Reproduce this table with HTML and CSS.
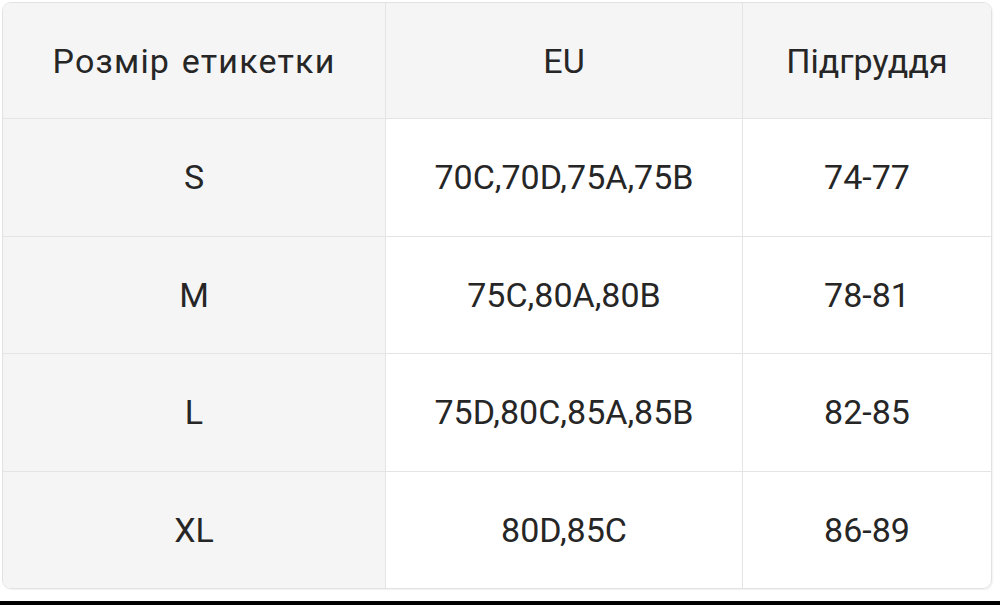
FILE: index.html
```html
<!DOCTYPE html>
<html lang="uk">
<head>
<meta charset="utf-8">
<title>Розмірна сітка</title>
<link rel="stylesheet" href="styles.css">
</head>
<body>
<div class="page">
  <div class="card">
    <table class="sizes">
      <thead>
        <tr><th class="c1 wide">Розмір етикетки</th><th class="c2">EU</th><th class="c3">Підгруддя</th></tr>
      </thead>
      <tbody>
        <tr><td class="c1">S</td><td class="c2">70C,70D,75A,75B</td><td class="c3">74-77</td></tr>
        <tr><td class="c1">M</td><td class="c2">75C,80A,80B</td><td class="c3">78-81</td></tr>
        <tr><td class="c1">L</td><td class="c2">75D,80C,85A,85B</td><td class="c3">82-85</td></tr>
        <tr><td class="c1">XL</td><td class="c2">80D,85C</td><td class="c3">86-89</td></tr>
      </tbody>
    </table>
  </div>
  <div class="bar"></div>
</div>
</body>
</html>
```
FILE: styles.css
```css
html, body {
  margin: 0;
  padding: 0;
  background: #ffffff;
}
.page {
  width: 1000px;
  height: 605px;
  box-sizing: border-box;
  padding: 2px 8px 0 2px;
  display: flex;
  flex-direction: column;
}
.card {
  width: 990px;
  height: 587px;
  border: 1px solid #e2e2e2;
  border-radius: 9px;
  overflow: hidden;
  box-sizing: border-box;
  box-shadow: 1px 1px 2px rgba(0,0,0,0.06);
}
.sizes {
  width: 100%;
  height: 100%;
  border-collapse: collapse;
  table-layout: fixed;
  font-family: Roboto, "Liberation Sans", sans-serif;
  font-size: 34px;
  color: #262626;
}
.sizes th, .sizes td {
  font-weight: 400;
  text-align: center;
  vertical-align: middle;
  border-bottom: 1px solid #e4e4e4;
  border-right: 1px solid #e4e4e4;
  padding: 0;
}
.sizes tr:last-child td { border-bottom: none; }
.sizes .c3 { border-right: none; }
.sizes thead th { background: #f5f5f5; height: 115px; }
.sizes th.wide { letter-spacing: 1.2px; word-spacing: 2px; }
.sizes td { height: 116px; }
.sizes td.c1 { background: #f5f5f5; }
.sizes .c1 { width: 382px; }
.sizes .c2 { width: 356px; }
.bar {
  margin-top: auto;
  margin-left: -2px;
  width: 1000px;
  height: 4px;
  background: #000;
}
```
